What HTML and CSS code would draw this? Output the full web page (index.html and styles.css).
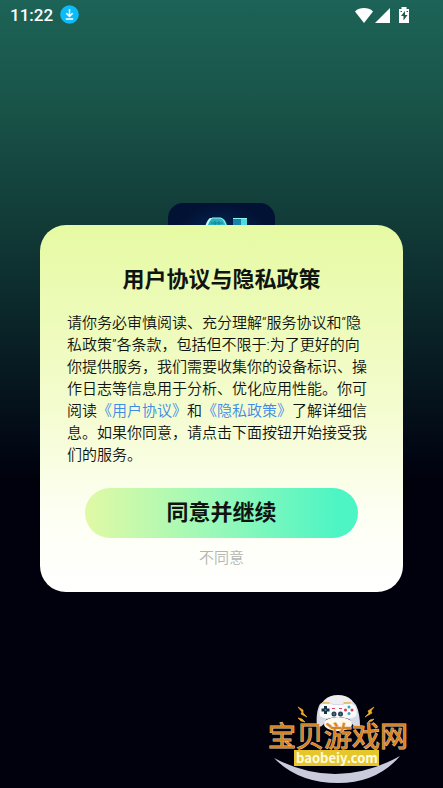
FILE: index.html
```html
<!DOCTYPE html>
<html lang="zh-CN">
<head>
<meta charset="utf-8">
<meta name="viewport" content="width=device-width, initial-scale=1">
<title>用户协议与隐私政策</title>
<link rel="stylesheet" href="styles.css">
</head>
<body>
<div class="screen">
  <header class="status-bar">
    <span class="clock">11:22</span>
    <svg class="download" viewBox="0 0 19 19" aria-hidden="true">
      <circle cx="9.5" cy="9.5" r="9.3" fill="#0cbcfa"/>
      <path d="M9.500 4v7M6.300 8.200l3.200 3.200 3.200-3.200M5.800 14h7.400" fill="none" stroke="#fff" stroke-width="1.500"/>
    </svg>
    <svg class="signals" viewBox="0 0 56 18" aria-hidden="true">
      <path d="M1 5.400C3.500 3 6.500 2 10 2s6.500 1 9 3.400L10 17z" fill="#fff"/>
      <path d="M36 2v15H21z" fill="#fff"/>
      <path d="M45 3h2.500V1h5v2H55v14H45z" fill="#fff"/>
      <path d="M51 5l-4 5h2.500v4.500l4-5.500H51zM46.500 5h1.500v1h-1.500zM52.500 5H54v1h-1.500z" fill="#1c5c51"/>
    </svg>
  </header>

  <main class="stage">
    <svg class="app-icon" viewBox="0 0 107 107" aria-hidden="true">
      <defs>
        <radialGradient id="navy"><stop offset="0" stop-color="#06346a"/><stop offset="1" stop-color="#021235"/></radialGradient>
        <linearGradient id="cyan" x2="1"><stop offset="0" stop-color="#a5fff5"/><stop offset=".4" stop-color="#23aebb"/><stop offset="1" stop-color="#41c3cb"/></linearGradient>
      </defs>
      <rect width="107" height="107" rx="15" fill="url(#navy)"/>
      <path d="M22 75L39 22Q42 15 46 15h7q4 0 6 7l12 53H57l-3-18H38l-5 18z" fill="url(#cyan)"/>
      <path d="M39 24q3-8 6-9h-3q-3 2-5 9z" fill="#c4fff8"/>
      <path d="M44 15h9q3 1 5 7" fill="none" stroke="#9cf7ef"/>
      <path d="M65 15h14v60H65z" fill="#1583ab"/>
      <path d="M73 15h6v60h-6z" fill="#4fdadb"/>
      <path d="M65 15.500h14" stroke="#8ff4ee"/>
      <path d="M47 18v7m4-7v7M43 20h12" stroke="#137f9b"/>
    </svg>

    <section class="dialog" role="dialog" aria-labelledby="dialog-title">
      <h1 class="title" id="dialog-title">用户协议与隐私政策</h1>
      <p class="copy">请你务必审慎阅读、充分理解“服务协议和“隐私政策”各条款，包括但不限于:为了更好的向你提供服务，我们需要收集你的设备标识、操作日志等信息用于分析、优化应用性能。你可阅读<a href="#terms">《用户协议》</a>和<a href="#privacy">《隐私政策》</a>了解详细信息。如果你同意，请点击下面按钮开始接受我们的服务。</p>
      <button class="agree" type="button">同意并继续</button>
      <button class="decline" type="button">不同意</button>
    </section>
  </main>

  <svg class="watermark" viewBox="0 0 150 95">
    <path d="M9 68Q72 101 135 66Q112 93 73 93Q33 93 9 68z" fill="#c9cbdc"/>
    <path d="M54 24C54 12 62 5 73 5s19 7 19 19z" fill="#eeedf0"/>
    <path d="M55 14c5-4 10-2 13 0h10c4-3 10-3 13 1 3 6 4 14 4 21-5 2-8-1-10-6-3-4-21-4-24 0-2 5-5 8-9 6-1-8 0-17 3-22z" fill="#d7dae5"/>
    <path d="M56 15c4-3 9-2 12 0h10c4-3 9-2 12 1 2 4 2 8 1 10-4 3-10 3-13 1H68c-3 2-9 2-13-1-1-4-1-8 1-11z" fill="#fafafd"/>
    <ellipse cx="73" cy="34" rx="14" ry="7" fill="#fff8ef"/>
    <path d="M58 13h6M79 13h6" stroke="#efb34e" stroke-width="1.500" stroke-linecap="round"/>
    <path d="M60.500 16v8M56.500 20h8" stroke="#163247" stroke-width="3"/>
    <circle cx="60.500" cy="20" r="1" fill="#5a8097"/>
    <path d="M67 18.500h3M74 18.500h3" stroke="#d9435e"/>
    <g fill="#244156"><circle cx="69" cy="24" r="2.500"/><circle cx="75.500" cy="24" r="2.500"/></g>
    <g fill="#4e7789"><circle cx="69" cy="24" r="1"/><circle cx="75.500" cy="24" r="1"/></g>
    <g fill="#d53b4b"><circle cx="80.500" cy="20" r="1.500"/><circle cx="87" cy="20" r="1.500"/></g>
    <g fill="#35a8bb"><circle cx="84" cy="17" r="1.500"/><circle cx="84" cy="23.500" r="1.500"/></g>
    <path d="M33 17l5 3v3l4 4-6-3 1-2zM33 28l4 1 3 3-4-1zM109 17l-6 4 1 2-4 4 7-4-1-2zM109 29l-4 1-2 2 4-1z" fill="#f0ae25" stroke="#f0ae25" stroke-width=".7"/>
    <text class="brand" x="3" y="57">宝贝游戏网</text>
    <path d="M29 60h85v16H29z" fill="#e6c72b"/>
    <text class="domain" x="72" y="73" text-anchor="middle">baobeiy.com</text>
  </svg>
</div>
</body>
</html>
```

FILE: styles.css
```css
* {
  box-sizing: border-box;
}

body {
  margin: 0;
  font-family: Roboto, "Noto Sans CJK SC", sans-serif;
}

.screen {
  position: relative;
  display: flex;
  flex-direction: column;
  min-height: 100vh;
  background: linear-gradient(#1d6357 0%, #195449 13%, #113a37 29%, #092126 43%, #020714 57%, #00010c 61%);
}

.status-bar {
  display: flex;
  align-items: center;
  height: 29px;
  padding: 0 33px 0 10px;
  color: #fff;
}

.clock {
  font-size: 17px;
  font-weight: 500;
  line-height: 20px;
}

.download {
  width: 19px;
  height: 19px;
  margin-left: 7px;
}

.signals {
  width: 56px;
  height: 18px;
  margin-left: auto;
}

.stage {
  display: grid;
  flex: 1;
  align-items: center;
  padding: 0 40px;
}

.app-icon,
.dialog {
  grid-area: 1 / 1;
}

.app-icon {
  align-self: start;
  justify-self: center;
  width: 107px;
  height: 107px;
  margin-top: 174px;
}

.dialog {
  z-index: 1;
  display: flex;
  flex-direction: column;
  align-items: center;
  padding: 39px 26px 22px;
  border-radius: 26px;
  background: linear-gradient(#e6faa3, #f4fccf 50%, #fdfff4 80%, #fff);
  color: #101410;
}

.title {
  margin: 0;
  font-size: 22px;
  line-height: 32px;
  font-weight: 700;
}

.copy {
  margin: 16px 0 22px;
  padding: 0 3px 0 1px;
  font-size: 15px;
  font-weight: 350;
  line-height: 22px;
}

.copy a {
  color: #3e8ae8;
  text-decoration: none;
}

button {
  border: 0;
  color: inherit;
  font-family: inherit;
}

.agree {
  width: 88%;
  height: 50px;
  padding: 0 0 6px;
  border-radius: 25px;
  background: linear-gradient(90deg, #e1f9a5, #9df9b7 45%, #4ef5c4 92%);
  font-size: 22px;
  font-weight: 700;
}

.decline {
  margin-top: 8px;
  padding: 0 12px;
  background: none;
  color: #b3b5b0;
  font-size: 15px;
  font-weight: 350;
  line-height: 24px;
}

.watermark {
  position: absolute;
  right: 28px;
  bottom: 3px;
  width: 150px;
  height: 95px;
}

.brand {
  fill: #d98420;
  stroke: #e9c9a2;
  stroke-width: 1px;
  paint-order: stroke;
  font: 400 28px "Noto Sans CJK SC", sans-serif;
}

.domain {
  fill: #fffbe0;
  font: 700 13px "Noto Sans CJK SC", sans-serif;
}
```
